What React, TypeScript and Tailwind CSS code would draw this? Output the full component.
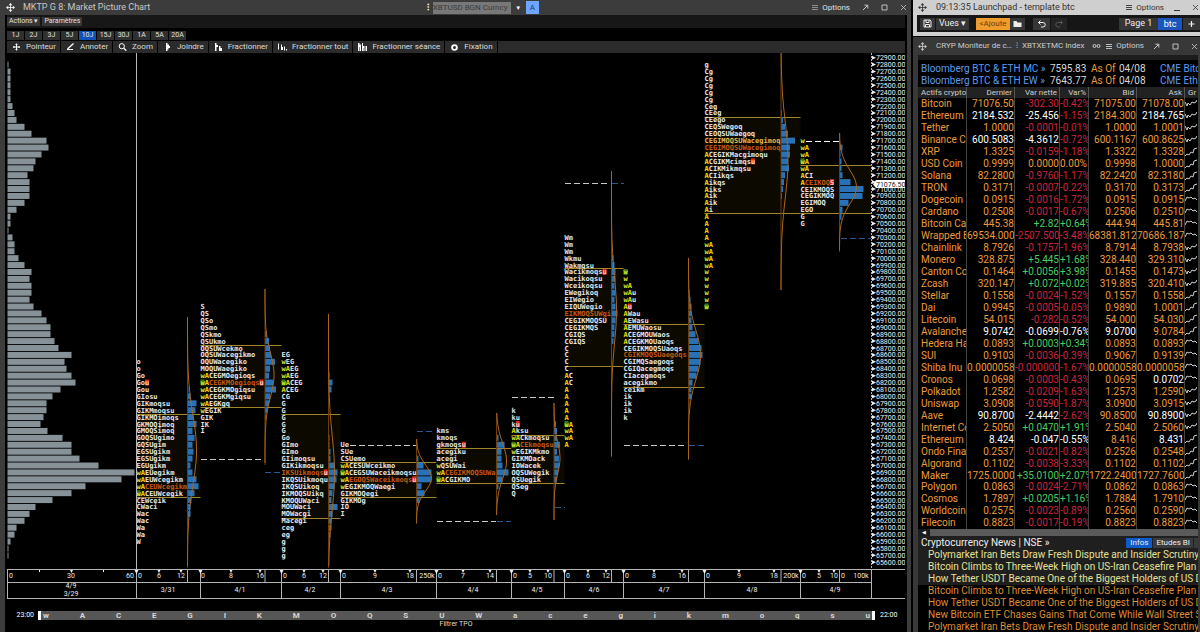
import { ReactNode } from 'react'

const ROW = 6.912
const TOP = 57.7
const CHAR = 4.214
const rowY = (i: number) => TOP + i * ROW

interface Profile {
  date: string
  x: number
  end: number
  volX: number
  dateX: number
  start: number
  rows: string[]
  poc: number
  close?: number
  open?: number
  area: [number, number]
  curve: { from: number; to: number; mu: number; sigma: number; amp: number }
  volStart: number
  vol: number[]
  labels: [number, string][]
}

const profiles: Profile[] = [
  {
    date: '3/31', x: 136.5, end: 200.5, volX: 187.5, dateX: 168, start: 44, poc: 62, close: 47, open: 63,
    rows: ['o', 'o', 'Go', 'Gou', 'Gou', 'GIosu', 'GIKmoqsu', 'GIKMmoqsu', 'GIKMOimoqs', 'GKMOQimoq', 'GMOQSimoq', 'GOQSUgimo', 'GQSUgim', 'EGSUgikm', 'EGSUgikm', 'EGUgikm', 'wAEUegikm', 'wAEUWcegikm', 'wACEUWcegikm', 'wACEUWcegik', 'CEWceik', 'CWaci', 'Wac', 'Wac', 'Wa', 'Wa', 'W'],
    area: [414, 497],
    curve: { from: 317, to: 568, mu: 450, sigma: 35, amp: 9 },
    volStart: 48, vol: [1, 3, 9, 8, 6, 9, 5, 7, 5, 6, 5, 3, 5, 9, 11, 7, 4, 3, 3, 1],
    labels: [[140, '0'], [159, '6'], [181, '12']],
  },
  {
    date: '4/1', x: 200.5, end: 281.5, volX: 265, dateX: 240, start: 36, poc: 47, close: 47, open: 47,
    rows: ['S', 'QS', 'QSo', 'QSmo', 'QSkmo', 'QSUkmo', 'OQSUWcekmo', 'OQSUWacegikmo', 'OQUWacegiko', 'MOQUWaegiko', 'wACEGMOegioqs', 'wACEGKMOegioqsu', 'wACEGKMOgiqsu', 'wACEGKMgiqsu', 'wAEGKgq', 'wEGIK', 'GIK', 'IK', 'I'],
    area: [345, 407],
    curve: { from: 289, to: 465, mu: 375, sigma: 22, amp: 9 },
    volStart: 40, vol: [2, 4, 5, 6, 10, 5, 4, 8, 11, 5, 4, 2, 1],
    labels: [[203, '0'], [231, '8'], [260, '16']],
  },
  {
    date: '4/2', x: 281.5, end: 340.5, volX: 328.5, dateX: 310, start: 43, poc: 60, close: 60, open: 47,
    rows: ['EG', 'wEG', 'wAEG', 'wAEG', 'wACEG', 'ACEG', 'CG', 'G', 'G', 'G', 'G', 'G', 'Go', 'GImo', 'GImo', 'GIimoqsu', 'GIKikmoqsu', 'IKSUikmoqsu', 'IKQSUikmoqu', 'IKQSUikoq', 'IKMOQSUikq', 'KMOQUWaci', 'MOUWaci', 'MOWacgi', 'Macegi', 'ceg', 'eg', 'g', 'g', 'g'],
    area: [414, 518],
    curve: { from: 314, to: 568, mu: 473, sigma: 38, amp: 6 },
    volStart: 46, vol: [1, 4, 3, 0, 0, 0, 0, 0, 0, 1, 1, 2, 2, 6, 9, 8, 6, 4, 3, 9, 4, 3, 3, 2, 1],
    labels: [[285, '0'], [304, '6'], [323, '12']],
  },
  {
    date: '4/3', x: 340.5, end: 436.5, volX: 416.5, dateX: 387, start: 56, poc: 61, close: 61, open: 60,
    rows: ['Ue', 'SUe', 'CSUemo', 'wACESUWceikmo', 'wACEGSUWaceikmoqsu', 'wAEGOQSWaceikmoqsu', 'wEGIKMOQWaegi', 'GIKMOQegi', 'GIKMOg', 'IO', 'I'],
    area: [462, 497],
    curve: { from: 439, to: 524, mu: 478, sigma: 13, amp: 15 },
    volStart: 58, vol: [2, 7, 15, 15, 5, 8, 3],
    labels: [[344, '0'], [375, '9'], [410, '18'], [427, '250k']],
  },
  {
    date: '4/4', x: 436.5, end: 511.5, volX: 496.5, dateX: 473, start: 54, poc: 60, close: 56, open: 61,
    rows: ['kms', 'kmoqs', 'gkmoqsu', 'acegiku', 'acegi', 'wQSUWai', 'wACEGIKMOQSUWa', 'wACGIKMO'],
    area: [448, 483],
    curve: { from: 413, to: 515, mu: 461, sigma: 18, amp: 10 },
    volStart: 55, vol: [2, 8, 5, 5, 6, 12, 6, 2],
    labels: [[440, '0'], [463, '7'], [490, '14']],
  },
  {
    date: '4/5', x: 511.5, end: 564.5, volX: 554, dateX: 537, start: 51, poc: 56, close: 53, open: 56,
    rows: ['k', 'ku', 'ku', 'Aksu', 'wACkmoqsu', 'wACEkmoqsu', 'wEGIKMkmo', 'GIKMOack', 'IOWacek', 'OQSUWegik', 'QSUegik', 'QSeg', 'Q'],
    area: [435, 483],
    curve: { from: 403, to: 520, mu: 458, sigma: 16, amp: 6 },
    volStart: 52, vol: [1, 2, 3, 3, 6, 3, 5, 5, 4, 3],
    labels: [[515, '0'], [530, '5'], [548, '10']],
  },
  {
    date: '4/6', x: 564.5, end: 623.5, volX: 611.5, dateX: 594, start: 26, poc: 37, close: 31, open: 53,
    rows: ['Wm', 'Wm', 'Wm', 'Wkmu', 'Wakmqsu', 'Wacikmoqsu', 'Wacikoqsu', 'Wceikoqsu', 'EWegikoq', 'EIWegio', 'EIQUWegio', 'EIKMOQSUWgi', 'CEGIKMOQSU', 'CEGIKMQS', 'CGIQS', 'CGIQS', 'C', 'C', 'C', 'C', 'AC', 'AC', 'A', 'A', 'A', 'A', 'A', 'wA', 'wA', 'wA', 'A'],
    area: [268, 366],
    curve: { from: 171, to: 457, mu: 310, sigma: 33, amp: 5 },
    volStart: 28, vol: [1, 2, 3, 4, 4, 3, 4, 3, 4, 6, 4, 3, 3, 2],
    labels: [[568, '0'], [588, '6'], [606, '12']],
  },
  {
    date: '4/7', x: 623.5, end: 704.5, volX: 688.5, dateX: 664, start: 31, poc: 43, close: 36, open: 31,
    rows: ['w', 'w', 'wA', 'wAu', 'wAu', 'Au', 'AWau', 'AEWasu', 'AEMUWaosu', 'ACEGMOUWaos', 'ACEGKMOUaoqs', 'CEGIKMOQSUaoqs', 'CGIKMOQSUaegoqs', 'CGIMQSaegoqs', 'CGIQacegmoqs', 'CIacegmoqs', 'acegikmo', 'ceikm', 'ik', 'ik', 'ik', 'k'],
    area: [324, 387],
    curve: { from: 258, to: 460, mu: 355, sigma: 25, amp: 12 },
    volStart: 34, vol: [1, 2, 3, 3, 3, 4, 7, 10, 13, 14, 12, 10, 8, 4, 3, 3, 1],
    labels: [[627, '0'], [654, '8'], [682, '16']],
  },
  {
    date: '4/8', x: 704.5, end: 800.5, volX: 781, dateX: 752, start: 1, poc: 13, close: 15, open: 36,
    rows: ['g', 'Cg', 'Cg', 'Cg', 'Cg', 'Cg', 'Ceg', 'CEeg', 'CEego', 'CEQSWegoq', 'CEOQSUWaegoq', 'CEGIMOQSUWacegimoq', 'CEGIMOQSUWacegimoq', 'ACEGIKMacgimoqu', 'ACGIKMcimqsu', 'ACIKMikmqsu', 'ACIikqs', 'Aikqs', 'Aiks', 'Aik', 'Aik', 'Ai', 'A', 'A', 'A', 'A', 'wA', 'wA', 'wA', 'wA', 'w', 'w', 'w', 'w', 'w', 'w'],
    area: [117, 213],
    curve: { from: 53, to: 290, mu: 160, sigma: 38, amp: 7 },
    volStart: 8, vol: [1, 2, 4, 7, 14, 9, 9, 7, 8, 4, 3, 2, 1],
    labels: [[708, '0'], [739, '9'], [774, '18'], [791, '200k']],
  },
  {
    date: '4/9', x: 800.5, end: 871.5, volX: 839.5, dateX: 835, start: 12, poc: 18, close: 18, open: 15,
    rows: ['w', 'wA', 'wA', 'wA', 'wA', 'ACI', 'ACEIKOQS', 'CEIKMOQS', 'CEGIKMOQ', 'EGIMOQ', 'EGO', 'G', 'G'],
    area: [165, 213],
    curve: { from: 133, to: 252, mu: 187, sigma: 17, amp: 17 },
    volStart: 13, vol: [3, 1, 2, 2, 3, 11, 24, 23, 9, 3, 2],
    labels: [[804, '0'], [819, '5'], [834, '10'], [843, '0'], [861, '100k']],
  },
]

const composite = [
  1, 3, 3, 3, 3, 3, 5, 7, 9, 17, 24, 39, 41, 34, 28, 26, 20, 22, 22, 22, 17, 9, 3, 3, 1, 5, 7, 7, 11, 17, 24, 22, 24, 24, 22, 26,
  34, 39, 43, 43, 47, 51, 64, 57, 59, 64, 68, 53, 45, 39, 39, 36, 33, 40, 55, 64, 64, 72, 91, 127, 114, 78, 64, 45, 28, 22, 17, 9, 7, 3, 1, 1,
]

// x1, x2, y, colour of untouched levels
const levels: [number, number, number, string][] = [
  [201, 264, 459, '#c8c8c8'], [265, 281, 472, '#2a5a94'],
  [350, 416, 445, '#c8c8c8'], [417, 434, 431, '#2a5a94'],
  [437, 496, 521, '#c8c8c8'], [497, 511, 521, '#2a5a94'],
  [512, 554, 397, '#c8c8c8'], [555, 565, 507, '#2a5a94'],
  [565, 610, 183, '#c8c8c8'], [612, 624, 183, '#2a5a94'],
  [624, 687, 445, '#c8c8c8'], [689, 704, 445, '#2a5a94'],
  [806, 839, 141, '#ffffff'], [841, 871, 238, '#2a5a94'],
]

function curvePath({ curve, volX }: Profile) {
  const pts: string[] = []
  for (let y = curve.from; y <= curve.to; y += 3) {
    const d = (y - curve.mu) / curve.sigma
    pts.push(`${(volX + curve.amp * Math.exp((-d * d) / 2)).toFixed(1)},${y}`)
  }
  return 'M' + pts.join('L')
}

function letterColor(ch: string, row: number, p: Profile) {
  if (ch === 'w') return '#d8e83a'
  if (ch === 'A') return '#f5e000'
  if (row === p.poc) return '#c8580f'
  if (p.date === '4/8' && row === 12) return '#e8b850'
  return '#e8e8e8'
}

// neighbouring letters of one colour share a tspan
function colorRuns(text: string, row: number, p: Profile) {
  const runs: { fill: string; text: string }[] = []
  text.split('').forEach((ch, i) => {
    const fill = row === p.close && i === text.length - 1 ? '#ffc8c0' : letterColor(ch, row, p)
    const last = runs[runs.length - 1]
    if (last && last.fill === fill) last.text += ch
    else runs.push({ fill, text: ch })
  })
  return runs
}

function TpoRow({ p, text, row }: { p: Profile; text: string; row: number }) {
  const y = rowY(row)
  return (
    <g>
      {row === p.close && <rect x={p.x + (text.length - 1) * CHAR} y={y - 3} width={4} height={6} fill="#e02818" />}
      {row === p.open && <rect x={p.x} y={y - 3} width={4} height={6} fill="#3a7a10" />}
      <text x={p.x} y={y + 2.5}>
        {colorRuns(text, row, p).map((run, i) => <tspan key={i} fill={run.fill}>{run.text}</tspan>)}
      </text>
    </g>
  )
}

function ProfileChart() {
  const edges = [7.5, ...profiles.map((p) => p.x), 871.5]
  return (
    <svg viewBox="7 53 898 546" className="block w-full font-[Roboto,sans-serif]" role="img" aria-label="Market Picture">
      {composite.map((w, i) => (
        <rect key={i} x={7.5} y={rowY(i + 1) - 3} width={w} height={6} fill="#879298" />
      ))}
      {profiles.map((p) => (
        <g key={p.date}>
          <rect x={p.x} y={p.area[0]} width={p.end - p.x} height={p.area[1] - p.area[0]} fill="#0c0901" />
          {p.area.map((y) => (
            <path key={y} d={`M${p.x} ${y + 0.5}H${p.end}`} stroke="#a08628" />
          ))}
          {p.vol.map((w, i) => (
            <rect key={i} x={p.volX} y={rowY(p.volStart + i) - 3} width={w} height={6} fill="#2a72b8" />
          ))}
          <path d={`M${p.volX} ${p.curve.from}V${p.curve.to}`} stroke="#6e3d0c" />
          <path d={curvePath(p)} fill="none" stroke="#a8661c" />
        </g>
      ))}
      {levels.map(([x1, x2, y, c], i) => (
        <path key={i} d={`M${x1} ${y + 0.5}H${x2}`} stroke={c} strokeDasharray="6 3" />
      ))}
      <g className="font-['DejaVu_Sans_Mono',monospace]" fontSize={7} fontWeight={700}>
        {profiles.map((p) => p.rows.map((r, i) => <TpoRow key={p.date + i} p={p} text={r} row={p.start + i} />))}
      </g>
      <path d="M136.5 53V569" stroke="#b8b8b8" />
      <path d="M871.5 53V569" stroke="#b0b0b0" strokeDasharray="2 1" />
      <g fontSize={7} fill="#f0f0f0">
        {Array.from({ length: 74 }, (_, i) => (
          <g key={i}>
            <path d={`M872 ${rowY(i) - 2}l4 2l-4 2z`} />
            {i !== 18 && <text x={876} y={rowY(i) + 2.5}>{(72900 - i * 100).toFixed(2)}</text>}
          </g>
        ))}
      </g>
      <path d="M873 184.500l3-4.500h29v8h-29z" fill="#fff" />
      <text x={876} y={187} fontSize={7} fill="#222">71076.50</text>

      <g stroke="#b4b4b4" fill="none">
        <path d="M7 569.5H905M7 582.5H871M7 598.5H905" />
        {edges.map((x) => <path key={x} d={`M${x} 569V598`} />)}
        {profiles.map((p) => <path key={p.date} d={`M${p.volX} 569V582`} />)}
      </g>
      <g fill="#eee" fontSize={7} textAnchor="middle">
        {profiles.map((p) => (
          <g key={p.date}>
            <path d={`M${p.x - 2} 570h4l-2 4z`} />
            {p.labels.map(([x, t], i) => (
              <g key={i}>
                {i > 0 && i < 3 && <path d={`M${x - 1.5} 570h3l-1.5 3z`} />}
                <text x={x} y={578}>{t}</text>
              </g>
            ))}
            <text x={p.dateX} y={592}>{p.date}</text>
          </g>
        ))}
        <path d="M70 570h3l-1.5 3zM39 570h1v2h-1zM103 570h1v2h-1z" />
        <text x={11} y={578}>0</text>
        <text x={71} y={578}>30</text>
        <text x={130} y={578}>60</text>
        <text x={71} y={588}>4/9</text>
        <text x={71} y={596}>3/29</text>
      </g>
    </svg>
  )
}

function Icon({ children, size = 'h-[8px] w-[9px]', box = '0 0 9 8' }: { children: ReactNode; size?: string; box?: string }) {
  return <svg viewBox={box} className={`shrink-0 ${size}`} fill="none" stroke="currentColor" aria-hidden="true">{children}</svg>
}

const MoveIcon = () => (
  <Icon size="h-[9px] w-[9px]" box="0 0 9 9">
    <path d="M4.5 1v7M1 4.5h7" strokeWidth="0.8" />
    <path d="M4.5 0l1.8 2.2H2.7zM4.5 9l1.8-2.2H2.7zM0 4.5l2.2-1.8v3.6zM9 4.5L6.8 2.7v3.6z" fill="currentColor" stroke="none" />
  </Icon>
)
const MenuIcon = () => <Icon size="h-[7px] w-[6px]" box="0 0 6 7"><path d="M0 1.5h6M0 3.5h6M0 5.5h6" strokeWidth="0.9" /></Icon>
const PopIcon = () => <Icon size="h-[7px] w-[7px]" box="0 0 7 7"><path d="M1 6L5.5 1.5M2.5 1.2h3.3v3.3" /></Icon>
const MaxIcon = () => <Icon size="h-[7px] w-[7px]" box="0 0 7 7"><path d="M1 1h5v5H1z" strokeWidth="0.9" /></Icon>
const CloseIcon = () => <Icon size="h-[7px] w-[7px]" box="0 0 7 7"><path d="M1 1l5 5M6 1L1 6" strokeWidth="0.8" /></Icon>

const tools: { name: string; icon: ReactNode }[] = [
  { name: 'Pointeur', icon: <Icon><path d="M4.5 0.5v7M1 4h7M3.5 1.5h2M3.5 6.5h2M2 3v2M7 3v2" /></Icon> },
  { name: 'Annoter', icon: <Icon><path d="M1.5 6L7.5 0.5" strokeWidth="1.3" /><path d="M1 6.5h6" /></Icon> },
  { name: 'Zoom', icon: <Icon><circle cx="3.8" cy="3.2" r="2.6" /><path d="M5.8 5.2L8.3 7.7" strokeWidth="1.3" /></Icon> },
  { name: 'Joindre', icon: <Icon><path d="M3 0h1.5v1.5h1.5v1.5h1v2h-1.5v1.5H4.500V8H3z" fill="currentColor" stroke="none" /></Icon> },
  { name: 'Fractionner', icon: <Icon><path d="M1 0h1.500v2h1.500v2h-1.500v4H1zM5 3h1.500v2H8v3H5z" fill="currentColor" stroke="none" /></Icon> },
  { name: 'Fractionner tout', icon: <Icon><path d="M0.500 0.500v6M3.500 1.500v5.500M4.500 4v3M6.500 3.500v4M8.500 6v1.500" /></Icon> },
  { name: 'Fractionner séance', icon: <Icon><path d="M0 0h1.500v1.500H3V8H1.800V4H1.300V8H0zM4 0h1v3h1.500v5H5.300V5H5V8H4zM7.500 3h1.500v5H7.500z" fill="currentColor" stroke="none" /></Icon> },
  { name: 'Fixation', icon: <Icon><circle cx="4.500" cy="4.500" r="2.400" strokeWidth="1.8" /></Icon> },
]

const periods = ['1J', '2J', '3J', '5J', '10J', '15J', '30J', '1A', '5A', '20A']
const brackets = 'wACEGIKMOQSUWacegikmoqsu'.split('')

function ChartWindow() {
  return (
    <section className="min-w-0 flex-1 border-r-2 border-black bg-[#3c3c3c] pr-[4px] pl-[5px]">
      <header className="flex h-[15px] items-center text-[9px] text-[#c8c8c8]">
        <div className="flex flex-8 items-center gap-[8px] pl-[1px]">
          <span className="text-white"><MoveIcon /></span>
          <h1 className="whitespace-nowrap">MKTP G 8: Market Picture Chart</h1>
        </div>
        <span className="mr-[4px] font-bold text-white">⁝</span>
        <input aria-label="Titre" defaultValue="XBTUSD BGN Curncy" className="h-[12px] w-[78px] bg-[#787878] text-[8px] text-[#3a3a3a]" />
        <button aria-label="Liste" className="w-[15px] text-[6px] text-white">▼</button>
        <button className="h-[13px] w-[13px] bg-[#6ea6ff] text-[8px] leading-[13px] text-[#123a78]">A</button>
        <div className="flex flex-7 items-center justify-end gap-[12px]">
          <button className="flex items-center gap-[4px] text-[8px] text-[#e0e0e0]"><span className="text-[#999999]"><MenuIcon /></span>Options</button>
          <button aria-label="Détacher"><PopIcon /></button>
          <button aria-label="Agrandir"><MaxIcon /></button>
          <button aria-label="Fermer"><CloseIcon /></button>
        </div>
      </header>
      <div className="min-h-[617px] bg-black px-[2px]">
        <div className="flex h-[13px] items-center gap-[2px] bg-[#171717] text-[7px] leading-[9px] text-[#e0e0e0]">
          <button className="h-[9px] bg-[#363636] px-[2px]">Actions ▾</button>
          <button className="h-[9px] bg-[#363636] px-[2px]">Paramètres</button>
        </div>
        <div className="flex gap-px pt-[3px] text-[7px] leading-[9px] text-[#e0e0e0]">
          {periods.map((p) => (
            <button key={p} className={`h-[9px] w-[17px] ${p === '10J' ? 'bg-[#0f53b8]' : 'bg-[#303030]'}`}>{p}</button>
          ))}
        </div>
        <nav className="mt-px flex h-[12px] bg-[#2b2b2b] text-[8px] leading-[12px] whitespace-nowrap text-[#dcdcdc]">
          {tools.map((t) => (
            <button key={t.name} className="flex items-center gap-[5px] border-r border-black pr-[4px] pl-[5px]">
              <span className="text-white">{t.icon}</span>
              {t.name}
            </button>
          ))}
        </nav>
        <ProfileChart />
        <div className="mt-[12px] flex items-center text-[7px] leading-[9px] text-white">
          <span className="w-[31px] pr-[4px] text-right">23:00</span>
          <div className="flex h-[9px] flex-1 justify-between border-x-3 border-white bg-[#565656] px-[2px] text-[8px] font-bold text-[#d8d8d8]">
            {brackets.map((b) => <span key={b}>{b}</span>)}
          </div>
          <span className="w-[30px] pl-[5px]">22:00</span>
        </div>
        <p className="text-center text-[7px] leading-[8px] text-[#dddddd]">Filtrer TPO</p>
      </div>
    </section>
  )
}

// name, last, net, pct, bid, ask, highlighted cells (l = last, n = net, p = pct, b = bid, a = ask)
const quotes: string[][] = [
  ['Bitcoin', '71076.50', '-302.30', '-0.42%', '71075.00', '71078.00', ''],
  ['Ethereum', '2184.532', '-25.456', '-1.15%', '2184.300', '2184.765', 'lna'],
  ['Tether', '1.0000', '-0.0001', '-0.01%', '1.0000', '1.0001', ''],
  ['Binance Coin', '600.5083', '-4.3612', '-0.72%', '600.1167', '600.8625', 'ln'],
  ['XRP', '1.3325', '-0.0159', '-1.18%', '1.3322', '1.3328', ''],
  ['USD Coin', '0.9999', '0.0000', '0.00%', '0.9998', '1.0000', ''],
  ['Solana', '82.2800', '-0.9760', '-1.17%', '82.2420', '82.3180', ''],
  ['TRON', '0.3171', '-0.0007', '-0.22%', '0.3170', '0.3173', ''],
  ['Dogecoin', '0.0915', '-0.0016', '-1.72%', '0.0915', '0.0915', ''],
  ['Cardano', '0.2508', '-0.0017', '-0.67%', '0.2506', '0.2510', ''],
  ['Bitcoin Cash', '445.38', '+2.82', '+0.64%', '444.94', '445.81', ''],
  ['Wrapped Bitcoin', '69534.000', '-2507.500', '-3.48%', '68381.812', '70686.187', ''],
  ['Chainlink', '8.7926', '-0.1757', '-1.96%', '8.7914', '8.7938', ''],
  ['Monero', '328.875', '+5.445', '+1.68%', '328.440', '329.310', ''],
  ['Canton Coin', '0.1464', '+0.0056', '+3.98%', '0.1455', '0.1473', ''],
  ['Zcash', '320.147', '+0.072', '+0.02%', '319.885', '320.410', ''],
  ['Stellar', '0.1558', '-0.0024', '-1.52%', '0.1557', '0.1558', ''],
  ['Dai', '0.9945', '-0.0005', '-0.05%', '0.9890', '1.0001', ''],
  ['Litecoin', '54.015', '-0.282', '-0.52%', '54.000', '54.030', ''],
  ['Avalanche', '9.0742', '-0.0699', '-0.76%', '9.0700', '9.0784', 'lnpb'],
  ['Hedera Hashgraph', '0.0893', '+0.0003', '+0.34%', '0.0893', '0.0893', ''],
  ['SUI', '0.9103', '-0.0036', '-0.39%', '0.9067', '0.9139', ''],
  ['Shiba Inu', '0.0000058', '-0.0000001', '-1.67%', '0.0000058', '0.0000058', ''],
  ['Cronos', '0.0698', '-0.0003', '-0.43%', '0.0695', '0.0702', 'a'],
  ['Polkadot', '1.2582', '-0.0209', '-1.63%', '1.2573', '1.2590', ''],
  ['Uniswap', '3.0908', '-0.0590', '-1.87%', '3.0900', '3.0915', ''],
  ['Aave', '90.8700', '-2.4442', '-2.62%', '90.8500', '90.8900', 'lna'],
  ['Internet Computer', '2.5050', '+0.0470', '+1.91%', '2.5040', '2.5060', ''],
  ['Ethereum', '8.424', '-0.047', '-0.55%', '8.416', '8.431', 'lnpa'],
  ['Ondo Finance', '0.2537', '-0.0021', '-0.82%', '0.2526', '0.2548', ''],
  ['Algorand', '0.1102', '-0.0038', '-3.33%', '0.1102', '0.1102', ''],
  ['Maker', '1725.0000', '+35.0100', '+2.07%', '1722.2400', '1727.7600', ''],
  ['Polygon', '0.0863', '-0.0024', '-2.71%', '0.0862', '0.0863', ''],
  ['Cosmos', '1.7897', '+0.0205', '+1.16%', '1.7884', '1.7910', ''],
  ['Worldcoin', '0.2575', '-0.0023', '-0.89%', '0.2560', '0.2590', ''],
  ['Filecoin', '0.8823', '-0.0017', '-0.19%', '0.8823', '0.8823', ''],
]

const sparks = [
  'M0 3l2 4l1-3l2 2l2-3l2 1l2-1l1-2',
  'M0 8l1-5l3 1l2-2l2 1l4-1',
  'M0 9l2-2l2 1l2-3l2 1l1-4l3-1',
  'M0 2l2 1l1 3l2-1l2 2l2-1l3 1',
  'M0 6l2-4l2 1l2-1l2 2l2-1l2 2',
  'M0 3l2 2l2-3l1 5l2-4l1 3l2-2l2 3',
]

function changeColor(v: string) {
  if (v[0] === '-') return 'text-[#cc2440]'
  if (v[0] === '+') return 'text-[#4ace62]'
  return 'text-[#ee9b3c]'
}

function QuoteTable() {
  const th = 'border-r border-[#555555] px-[2px] text-right font-normal'
  const td = 'overflow-hidden border-r border-[#444444] text-right'
  const tone = (hot: string, key: string, base: string) => (hot.includes(key) ? 'text-white' : base)
  return (
    <table className="h-[442px] w-full table-fixed border-separate border-spacing-0 text-[10px] leading-[11px] whitespace-nowrap text-[#ee9b3c]">
      <colgroup>
        <col />
        <col className="w-[48px]" />
        <col className="w-[45px]" />
        <col className="w-[29px]" />
        <col className="w-[48px]" />
        <col className="w-[48px]" />
        <col className="w-[13px]" />
      </colgroup>
      <thead className="bg-[#222222] text-[8px] text-[#cfcfcf]">
        <tr>
          <th className="overflow-hidden border-r border-[#555555] pl-[3px] text-left font-normal">Actifs crypto</th>
          <th className={th}>Dernier</th>
          <th className={th}>Var nette</th>
          <th className={th}>Var%</th>
          <th className={th}>Bid</th>
          <th className={th}>Ask</th>
          <th className="overflow-hidden pl-[3px] text-left font-normal">Gr</th>
        </tr>
      </thead>
      <tbody>
        {quotes.map(([name, last, net, pct, bid, ask, hot], i) => (
          <tr key={i}>
            <td className="overflow-hidden border-r border-[#444444] pl-[3px]">{name}</td>
            <td className={`${td} ${tone(hot, 'l', '')}`}>{last}</td>
            <td className={`${td} ${tone(hot, 'n', changeColor(net))}`}>{net}</td>
            <td className={`overflow-hidden border-r border-[#444444] ${tone(hot, 'p', changeColor(pct))}`}>{pct}</td>
            <td className={`${td} ${tone(hot, 'b', '')}`}>{bid}</td>
            <td className={`${td} ${tone(hot, 'a', '')}`}>{ask}</td>
            <td className="overflow-hidden">
              <svg viewBox="0 0 12 10" className="block h-[10px] w-[12px]" fill="none" stroke="#d0d0d0" aria-hidden="true">
                <path d={sparks[(i * 5 + (i % 4)) % 6]} />
              </svg>
            </td>
          </tr>
        ))}
      </tbody>
    </table>
  )
}

const headlines = [
  'Polymarket Iran Bets Draw Fresh Dispute and Insider Scrutiny',
  'Bitcoin Climbs to Three-Week High on US-Iran Ceasefire Plan',
  'How Tether USDT Became One of the Biggest Holders of US Debt',
  'Bitcoin Climbs to Three-Week High on US-Iran Ceasefire Plan',
  'How Tether USDT Became One of the Biggest Holders of US Debt',
  'New Bitcoin ETF Chases Gains That Come While Wall Street Sleeps',
  'Polymarket Iran Bets Draw Fresh Dispute and Insider Scrutiny',
]

function News() {
  return (
    <div className="text-[10px] leading-[12px] whitespace-nowrap">
      <div className="flex h-[13px] items-center bg-[#1f1f1f] pl-[3px] text-[#eeeeee]">
        <h2 className="flex-1">Cryptocurrency News | NSE »</h2>
        <button className="h-[10px] bg-[#0f5cc8] px-[4px] text-[8px] leading-[10px]">Infos</button>
        <button className="ml-px h-[10px] bg-[#3a3a3a] px-[3px] text-[8px] leading-[10px]">Etudes BI</button>
        <span className="ml-px h-[10px] w-[4px] bg-[#3a3a3a]" />
      </div>
      <ul>
        {headlines.map((h, i) => (
          <li key={i} className={`overflow-hidden pl-[10px] ${i < 3 ? 'bg-[#1f1f1f] text-[#e6e096]' : 'text-[#dd8c34]'}`}>
            <a href="#news">{h}</a>
          </li>
        ))}
      </ul>
    </div>
  )
}

function Launchpad() {
  const btn = 'flex h-[12px] items-center justify-center bg-[#363636] text-[#eeeeee]'
  return (
    <div className="bg-[#cfcfcf] pb-[4px] pl-[4px] text-[9px]">
      <header className="flex h-[15px] items-center pl-[1px] text-[#333333]">
        <MoveIcon />
        <h2 className="flex-1 pl-[9px] whitespace-nowrap">09:13:35 Launchpad - template btc</h2>
        <button className="flex items-center gap-[4px] pr-[10px] text-[8px]"><MenuIcon />Options</button>
        <button aria-label="Réduire" className="pr-[11px]"><Icon size="h-[7px] w-[7px]" box="0 0 7 7"><path d="M0 6.500h6" /></Icon></button>
        <button aria-label="Fermer" className="pr-[1px]"><CloseIcon /></button>
      </header>
      <div className="flex h-[17px] items-center bg-[#161616] pl-[3px]">
        <button aria-label="Enregistrer" className={`${btn} w-[15px]`}>
          <Icon size="h-[9px] w-[9px]" box="0 0 9 9"><path d="M1 1h6l1 1v6H1zM3 1v2.500h3V1M2.500 8V5.500h4V8" /></Icon>
        </button>
        <button className={`${btn} ml-px w-[33px]`}>Vues ▾</button>
        <button className="ml-[7px] h-[12px] w-[34px] bg-[#f09c2c] text-[8px] leading-[12px] text-[#6b4208]">&lt;Ajoute</button>
        <button aria-label="Dossier" className={`${btn} w-[15px]`}>
          <Icon><path d="M0.500 1h3l1 1.500h4V7h-8z" fill="currentColor" stroke="none" /></Icon>
        </button>
        <button aria-label="Annuler" className={`${btn} ml-[8px] w-[17px]`}>
          <Icon><path d="M3.500 0.500L1.500 2.500l2 2M1.500 2.500H6a2 2 0 0 1 0 4.500H4" /></Icon>
        </button>
        <button aria-label="Rétablir" className="ml-px flex h-[12px] w-[16px] items-center justify-center bg-[#242424] text-[#555555]">
          <Icon><path d="M5.500 0.500l2 2l-2 2M7.500 2.500H3a2 2 0 0 0 0 4.500h2" /></Icon>
        </button>
        <div className="ml-auto flex">
          <button className={`${btn} w-[39px]`}>Page 1</button>
          <button className="h-[12px] w-[24px] bg-[#1d55bd] leading-[12px] text-white">btc</button>
          <button aria-label="Ajouter une page" className={`${btn} ml-px w-[17px]`}>
            <Icon><path d="M4.500 1v6M1.500 4h6" strokeWidth="1.200" /></Icon>
          </button>
        </div>
      </div>
    </div>
  )
}

function Monitor() {
  return (
    <section className="flex-1 border-t border-black bg-[#383838] pr-[2px] pl-[5px]">
      <header className="flex h-[18px] items-center text-[8px] whitespace-nowrap text-[#cccccc]">
        <MoveIcon />
        <h2 className="pl-[9px]">CRYP Moniteur de c…</h2>
        <span className="px-[4px]">⁝</span>
        <span className="flex-1">XBTXETMC Index</span>
        <Icon><circle cx="2.500" cy="4" r="1.500" /><circle cx="6.500" cy="4" r="1.500" /></Icon>
        <button className="flex items-center gap-[4px] pr-[9px] pl-[5px]"><MenuIcon />Options</button>
        <button aria-label="Détacher" className="pr-[12px]"><PopIcon /></button>
        <button aria-label="Agrandir" className="pr-[12px]"><MaxIcon /></button>
        <button aria-label="Fermer"><CloseIcon /></button>
      </header>
      <div className="min-h-[577px] overflow-hidden border-t-5 border-[#1c1c1c] bg-black text-[10px]">
        <div className="pt-[3px] leading-[12px] whitespace-nowrap text-[#d8d8d8]">
          {[['MC', '7595.83', 'Bitcoin'], ['EW', '7643.77', 'Ether']].map(([kind, value, cme]) => (
            <div key={kind} className="flex overflow-hidden pl-[3px]">
              <a href={`#${kind}`} className="w-[129px] shrink-0 text-[#5a9cf0]">Bloomberg BTC &amp; ETH {kind} »</a>
              <span className="w-[41px] shrink-0">{value}</span>
              <span className="w-[28px] shrink-0 text-[#ee9b3c]">As Of</span>
              <span className="w-[41px] shrink-0">04/08</span>
              <a href="#cme" className="text-[#5a9cf0]">CME {cme}</a>
            </div>
          ))}
        </div>
        <QuoteTable />
        <div className="flex h-[7px] items-center bg-[#5a5a5a]">
          <button aria-label="Défiler" className="h-full w-[12px] bg-[#1c1c1c] text-[5px] leading-[7px] text-white">◀</button>
        </div>
        <News />
      </div>
    </section>
  )
}

export default function App() {
  return (
    <div className="flex min-h-screen overflow-hidden bg-black font-[Roboto,sans-serif]">
      <ChartWindow />
      <aside className="flex w-[287px] shrink-0 flex-col">
        <Launchpad />
        <Monitor />
      </aside>
    </div>
  )
}
